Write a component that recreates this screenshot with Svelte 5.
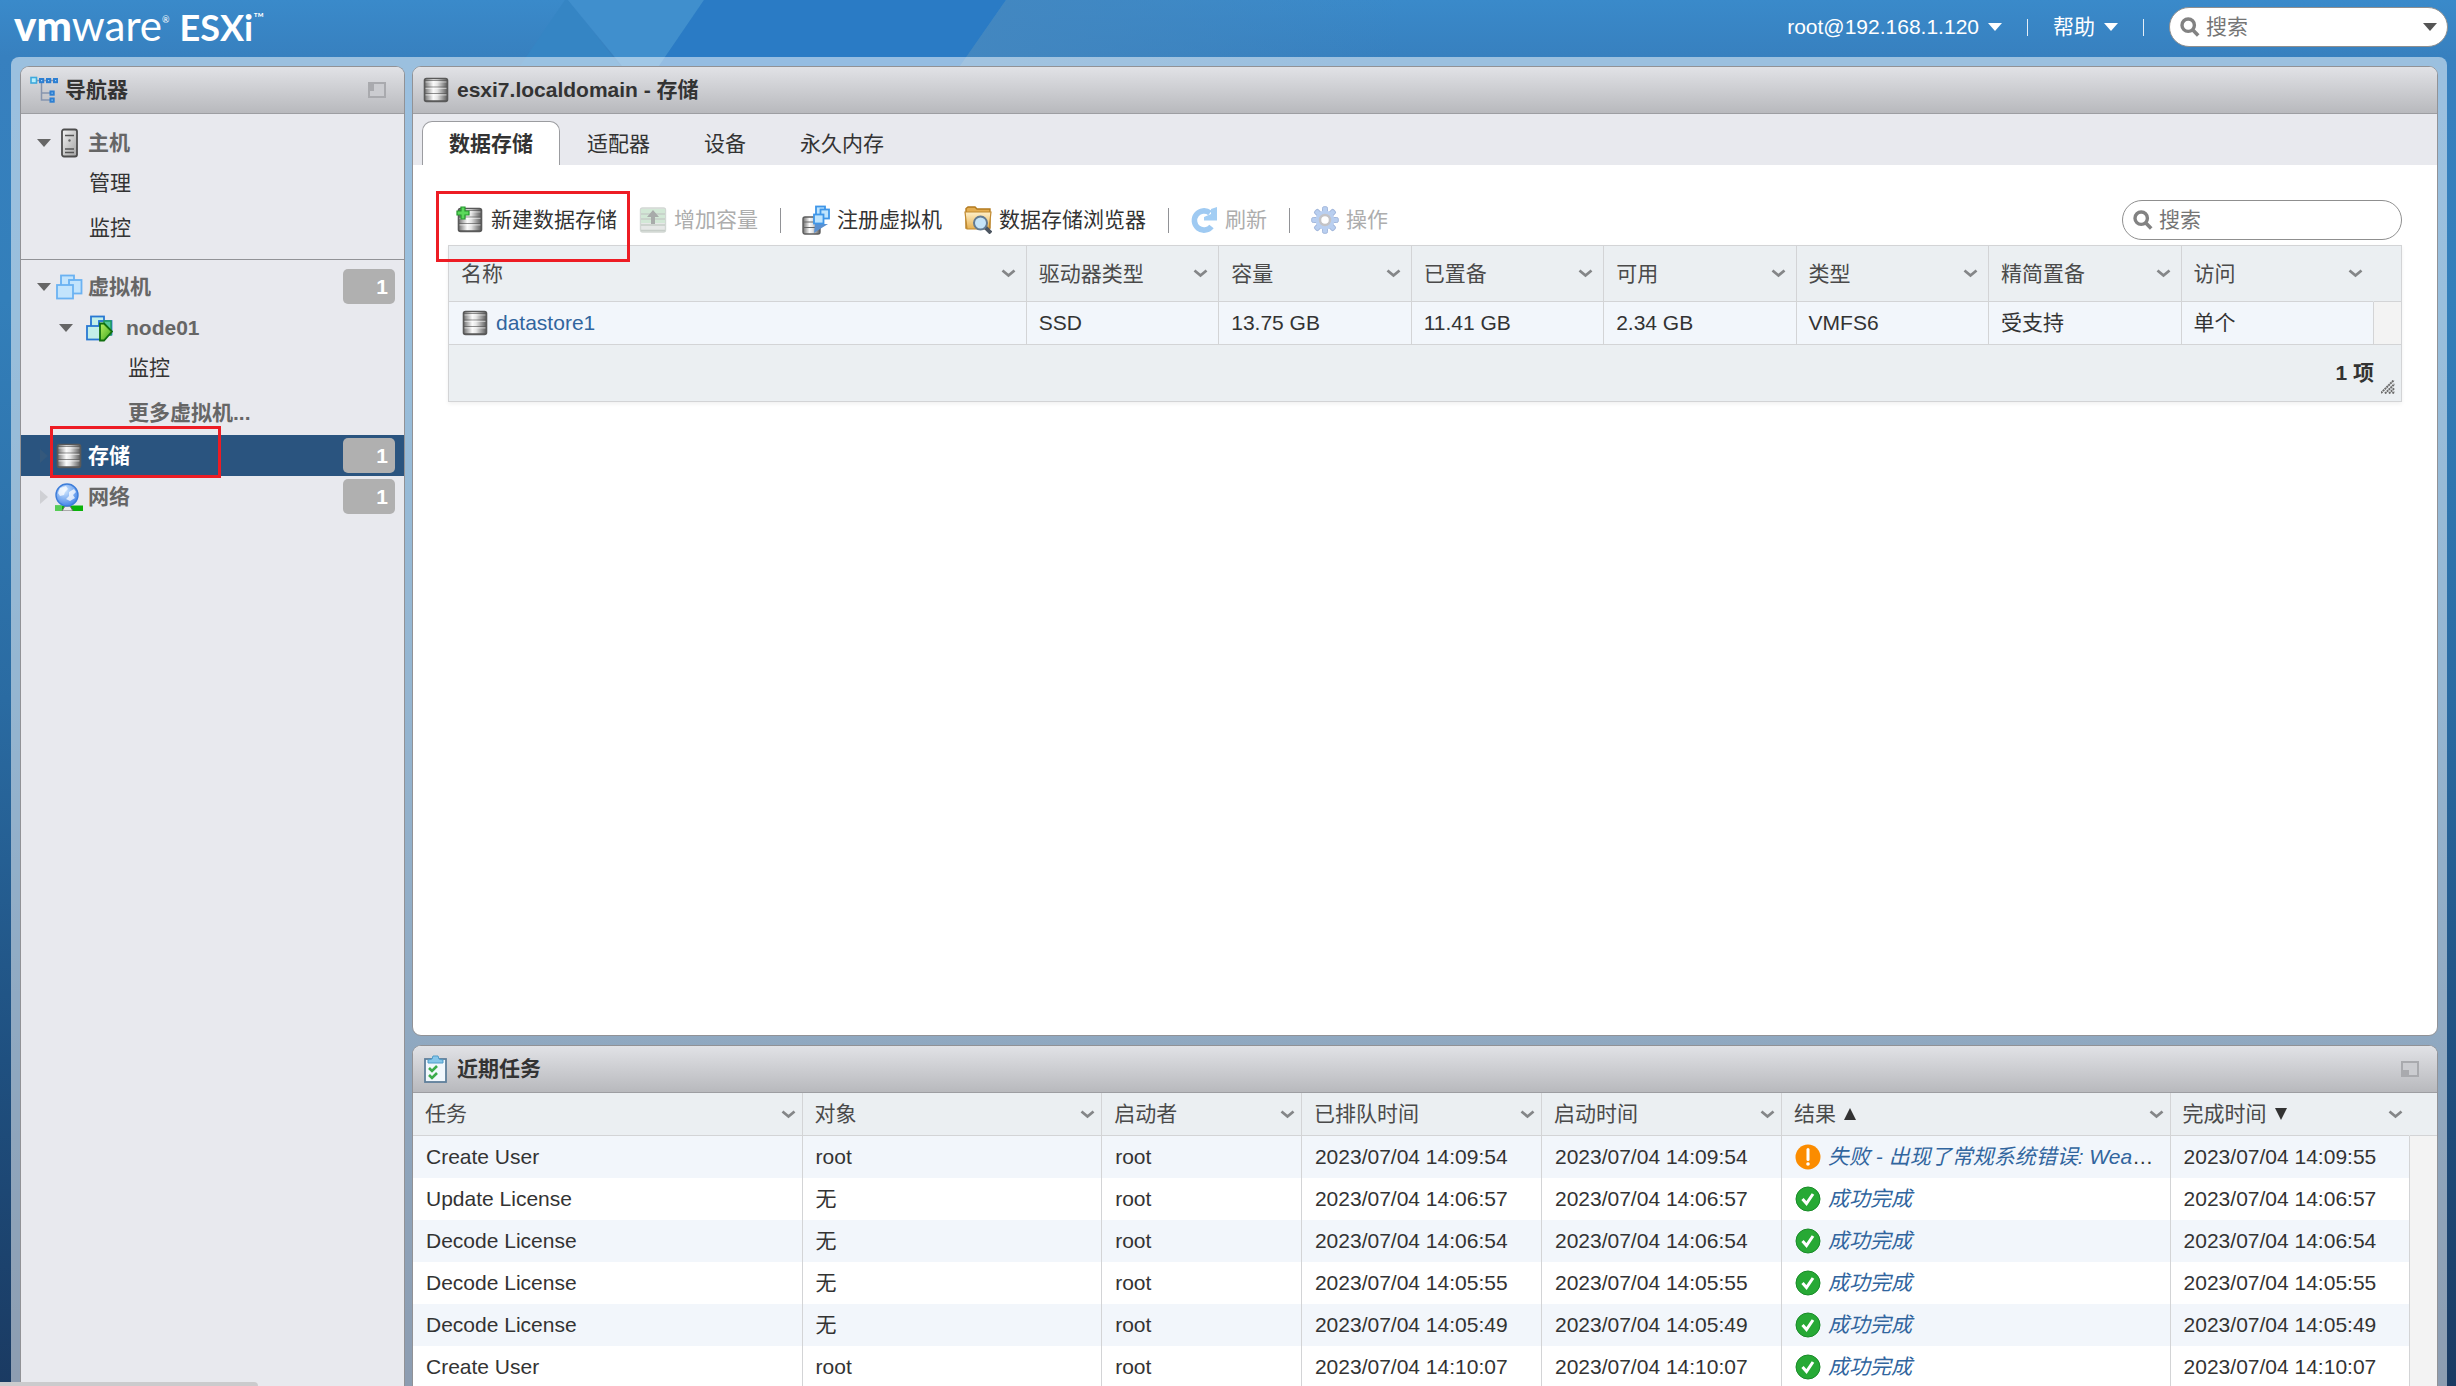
<script lang="ts">
  interface Column {
    label: string;
    width: string;
    sort?: 'up' | 'down';
  }

  interface Task {
    name: string;
    target: string;
    user: string;
    queued: string;
    started: string;
    failed?: boolean;
    result: string;
    completed: string;
  }

  const tabs = ['数据存储', '适配器', '设备', '永久内存'];
  let activeTab = $state('数据存储');

  const storeColumns: Column[] = [
    { label: '名称', width: '29.6%' },
    { label: '驱动器类型', width: 'auto' },
    { label: '容量', width: 'auto' },
    { label: '已置备', width: 'auto' },
    { label: '可用', width: 'auto' },
    { label: '类型', width: 'auto' },
    { label: '精简置备', width: 'auto' },
    { label: '访问', width: 'auto' },
  ];

  const datastores = [
    { name: 'datastore1', cells: ['SSD', '13.75 GB', '11.41 GB', '2.34 GB', 'VMFS6', '受支持', '单个'] },
  ];

  const taskColumns: Column[] = [
    { label: '任务', width: '19.25%' },
    { label: '对象', width: '14.8%' },
    { label: '启动者', width: '9.87%' },
    { label: '已排队时间', width: '11.86%' },
    { label: '启动时间', width: '11.86%' },
    { label: '结果', width: '19.2%', sort: 'up' },
    { label: '完成时间', width: 'auto', sort: 'down' },
  ];

  function done(name: string, target: string, time: string): Task {
    const stamp = '2023/07/04 ' + time;
    return { name, target, user: 'root', queued: stamp, started: stamp, result: '成功完成', completed: stamp };
  }

  const tasks: Task[] = [
    {
      name: 'Create User',
      target: 'root',
      user: 'root',
      queued: '2023/07/04 14:09:54',
      started: '2023/07/04 14:09:54',
      failed: true,
      result: '失败 - 出现了常规系统错误: Wea',
      completed: '2023/07/04 14:09:55',
    },
    done('Update License', '无', '14:06:57'),
    done('Decode License', '无', '14:06:54'),
    done('Decode License', '无', '14:05:55'),
    done('Decode License', '无', '14:05:49'),
    done('Create User', 'root', '14:10:07'),
  ];
</script>

{#snippet caret()}
  <svg class="caret" width="14" height="8" viewBox="0 0 14 8" aria-hidden="true"><path d="M0 0h14L7 8z" fill="currentColor" /></svg>
{/snippet}

{#snippet chevron()}
  <svg class="chevron" width="15" height="9" viewBox="0 0 15 9" aria-hidden="true">
    <path d="M1.5 1.5l6 5 6-5" fill="none" stroke="#848688" stroke-width="2.8" />
  </svg>
{/snippet}

{#snippet magnifier()}
  <svg class="magnifier" width="20" height="20" viewBox="0 0 20 20" aria-hidden="true">
    <circle cx="8.2" cy="8.2" r="6.2" fill="none" stroke="#828282" stroke-width="3.4" />
    <path d="M12.6 12.8l5.6 5.8" stroke="#828282" stroke-width="3.6" />
  </svg>
{/snippet}

{#snippet discs()}
  <rect x="2.5" y="2.5" width="23" height="23" rx="2" fill="url(#steel)" stroke="#5a5a5a" stroke-width="1.6" />
  <path d="M2 4.5h24M3 11h22M3 17.5h22M2 24.5h24" stroke="#555" stroke-opacity=".65" stroke-width="1.2" />
  <path d="M3.5 12.3h21M3.5 18.8h21M3.5 6h21" stroke="#fff" stroke-opacity=".5" stroke-width="1.2" />
{/snippet}

{#snippet storeIcon()}
  <svg class="icon" width="28" height="28" viewBox="0 0 28 28" aria-hidden="true">{@render discs()}</svg>
{/snippet}

{#snippet cubes(light: string, line: string)}
  <g fill={light} stroke={line} stroke-width="1.8">
    <rect x="6" y="2.5" width="13" height="12" />
    <rect x="14" y="7" width="12.5" height="13.5" />
    <rect x="2" y="12" width="16" height="13.5" />
  </g>
  <path d="M14 12V7h5M6 12V7.5" fill="none" stroke={line} stroke-width="1.3" stroke-opacity=".6" />
{/snippet}

{#snippet head(columns: Column[])}
  <colgroup>
    {#each columns as col}
      <col style:width={col.width} />
    {/each}
    <col class="gutter-col" />
  </colgroup>
  <thead>
    <tr>
      {#each columns as col}
        <th scope="col">
          <div class="th-inner">
            <span>{col.label}</span>
            {#if col.sort}
              <svg class="sort" width="12" height="12" viewBox="0 0 12 12" aria-hidden="true">
                <path d={col.sort === 'up' ? 'M6 0l6 12H0z' : 'M0 0h12L6 12z'} fill="#333" />
              </svg>
            {/if}
            {@render chevron()}
          </div>
        </th>
      {/each}
      <td></td>
    </tr>
  </thead>
{/snippet}

<svg class="defs" width="0" height="0" aria-hidden="true">
  <defs>
    <linearGradient id="steel">
      <stop offset="0" stop-color="#6f6f6f" />
      <stop offset=".38" stop-color="#fafafa" />
      <stop offset=".55" stop-color="#e6e6e6" />
      <stop offset="1" stop-color="#595959" />
    </linearGradient>
    <linearGradient id="tower" x2="1" y2="1">
      <stop offset="0" stop-color="#f4f4f4" />
      <stop offset="1" stop-color="#a2a2a2" />
    </linearGradient>
    <linearGradient id="folder" x2="0" y2="1">
      <stop offset="0" stop-color="#fff0c9" />
      <stop offset="1" stop-color="#e6b04f" />
    </linearGradient>
    <linearGradient id="play" x2="1" y2="1">
      <stop offset="0" stop-color="#b8f060" />
      <stop offset="1" stop-color="#3aa51c" />
    </linearGradient>
    <radialGradient id="globe" cx=".4" cy=".3" r=".75">
      <stop offset="0" stop-color="#d3e9ff" />
      <stop offset="1" stop-color="#3d80e6" />
    </radialGradient>
    <linearGradient id="haze">
      <stop offset="0" stop-color="#4387c0" />
      <stop offset="1" stop-color="#4387c0" stop-opacity="0" />
    </linearGradient>
  </defs>
</svg>

<div class="app">
  <svg class="backdrop" width="1400" height="66" viewBox="0 0 1400 66" aria-hidden="true">
    <path d="M565 0L520 66H620L568 0z" fill="#3585c4" />
    <path d="M568 0H704L659 66H622z" fill="#408fcd" />
    <path d="M704 0H1006L960 66H659z" fill="#2a7bc5" />
    <path d="M1006 0H1400V66H960z" fill="url(#haze)" />
  </svg>

  <header class="topbar">
    <div class="logo" aria-label="vmware ESXi">
      <span class="word"><b>vm</b>ware</span><sup>®</sup>
      <span class="product">ESXi</span><sup class="tm">™</sup>
    </div>
    <div class="account">
      <button class="menu" type="button">root@192.168.1.120 {@render caret()}</button>
      <span class="bar"></span>
      <button class="menu" type="button">帮助 {@render caret()}</button>
      <span class="bar"></span>
      <div class="search global">
        {@render magnifier()}
        <input type="text" placeholder="搜索" aria-label="搜索" />
        <button class="drop" type="button" aria-label="搜索选项">{@render caret()}</button>
      </div>
    </div>
  </header>

  <div class="frame">
    <aside class="panel navigator">
      <div class="panel-head">
        <svg class="icon" width="28" height="28" viewBox="0 0 28 28" aria-hidden="true">
          <path d="M4 4.5h22M11.5 4.5V24h9M11.5 17h9" fill="none" stroke="#8795ae" stroke-width="1.5" />
          <rect x="1" y="1.5" width="5.5" height="5.5" fill="#b9f0fb" stroke="#3fa9dc" stroke-width="1.6" />
          <g fill="#a4d4fa" stroke="#2d7fd2" stroke-width="2">
            <rect x="10" y="3" width="3.2" height="3.2" />
            <rect x="17" y="3" width="3.2" height="3.2" />
            <rect x="24" y="3" width="3.2" height="3.2" />
            <rect x="20.5" y="15.5" width="3.2" height="3.2" />
            <rect x="20.5" y="22.5" width="3.2" height="3.2" />
          </g>
        </svg>
        <h2>导航器</h2>
        <button class="resize" type="button" aria-label="最小化">
          <svg width="18" height="16" viewBox="0 0 18 16" aria-hidden="true">
            <rect x="1" y="1" width="16" height="14" fill="#cbccd0" stroke="#a9aaae" stroke-width="2" />
            <path d="M0 0h6v9H0z" fill="#a9aaae" />
          </svg>
        </button>
      </div>

      <nav>
        <div class="group">
          <a class="node" href="#host">
            <span class="arrow">{@render caret()}</span>
            <svg class="icon" width="28" height="30" viewBox="0 0 28 30" aria-hidden="true">
              <rect x="7" y="1.5" width="15" height="27" rx="2" fill="url(#tower)" stroke="#4d4d4d" stroke-width="1.8" />
              <path d="M10 7.5h9M10 21h9M10 24.5h9" stroke="#555" stroke-width="1.6" />
              <circle cx="14.5" cy="12.5" r="1.2" fill="#666" />
            </svg>
            <span>主机</span>
          </a>
          <div class="children">
            <a href="#manage">管理</a>
            <a href="#monitor">监控</a>
          </div>
        </div>

        <div class="group inventory">
          <a class="node" href="#vms">
            <span class="arrow">{@render caret()}</span>
            <svg class="icon" width="28" height="28" viewBox="0 0 28 28" aria-hidden="true">{@render cubes('#c3e4fc', '#6bb2f2')}</svg>
            <span>虚拟机</span>
            <span class="badge">1</span>
          </a>
          <a class="node inner" href="#node01">
            <span class="arrow">{@render caret()}</span>
            <svg class="icon" width="28" height="28" viewBox="0 0 28 28" aria-hidden="true">
              {@render cubes('#c2efe9', '#2878d2')}
              <path d="M19 7h7v14h-7z" fill="#53c69a" stroke="#1c9c5c" stroke-width="1.4" />
              <path d="M15 9.5h4l8 8-8 9h-4z" fill="url(#play)" stroke="#12700f" stroke-width="1.8" />
            </svg>
            <span>node01</span>
          </a>
          <div class="children deep">
            <a href="#vm-monitor">监控</a>
            <a class="more" href="#more">更多虚拟机...</a>
          </div>
          <a class="node selected" href="#storage" aria-current="page">
            <span class="arrow closed">{@render caret()}</span>
            {@render storeIcon()}
            <span>存储</span>
            <span class="badge">1</span>
            <span class="callout"></span>
          </a>
          <a class="node" href="#network">
            <span class="arrow closed">{@render caret()}</span>
            <svg class="icon" width="28" height="28" viewBox="0 0 28 28" aria-hidden="true">
              <path d="M0 22.5h28V28H0z" fill="#0ab30a" />
              <path d="M0 22.5h7V28H0z" fill="#55cc55" />
              <path d="M7 28l3-5h5l3 5z" fill="#e9e9e9" stroke="#6d6d6d" />
              <circle cx="12" cy="12" r="11" fill="url(#globe)" stroke="#3d7dd9" stroke-width="1.4" />
              <path d="M5 5l6-2 2 3-3 3-1 3-4 1-2-3zM14 9l5-3 2 3-3 3 2 3-5 3-4-2 3-3z" fill="#fff" fill-opacity=".75" />
            </svg>
            <span>网络</span>
            <span class="badge">1</span>
          </a>
        </div>
      </nav>
    </aside>

    <main class="panel">
      <div class="panel-head">
        {@render storeIcon()}
        <h1>esxi7.localdomain - 存储</h1>
      </div>

      <div class="tabs" role="tablist">
        {#each tabs as tab}
          <button
            type="button"
            role="tab"
            class:active={tab === activeTab}
            aria-selected={tab === activeTab}
            onclick={() => (activeTab = tab)}
          >{tab}</button>
        {/each}
      </div>

      <section class="content">
        <div class="toolbar">
          <button type="button">
            <svg class="icon" width="28" height="28" viewBox="0 0 28 28" aria-hidden="true">
              {@render discs()}
              <path d="M5 1h4v4h4v4H9v4H5V9H1V5h4z" fill="#5bd95b" stroke="#23962c" stroke-width="1.2" />
            </svg>
            新建数据存储
          </button>
          <button type="button" disabled>
            <svg class="icon" width="28" height="28" viewBox="0 0 28 28" aria-hidden="true">
              <rect x="1.5" y="2" width="25" height="24" rx="2" fill="#e6e8e7" stroke="#d2d8d4" stroke-width="1.4" />
              <path d="M2 3h24v14H2z" fill="#d2e8d6" />
              <path d="M2 8h24M2 13h24M2 19h24M2 24.5h24" stroke="#c6cdc8" stroke-width="1.4" />
              <path d="M14 4l6 7h-4v7h-4v-7H8z" fill="#a8abaa" />
            </svg>
            增加容量
          </button>
          <span class="divider"></span>
          <button type="button">
            <svg class="icon" width="28" height="30" viewBox="0 0 28 30" aria-hidden="true">
              <rect x="1" y="12" width="17" height="17" rx="2" fill="url(#steel)" stroke="#5c5c5c" stroke-width="1.4" />
              <path d="M1 17h17M1 22.5h17" stroke="#666" />
              <path d="M13 19h13l-8 5-6 4z" fill="#5a90d0" />
              <g fill="#bfe4fd" stroke="#3f96e8" stroke-width="1.8">
                <rect x="14" y="1.5" width="9" height="9" />
                <rect x="18.5" y="4.500" width="8.500" height="9" />
                <rect x="12" y="9.500" width="9.500" height="9" />
              </g>
            </svg>
            注册虚拟机
          </button>
          <button type="button">
            <svg class="icon" width="28" height="28" viewBox="0 0 28 28" aria-hidden="true">
              <path d="M2 22V2.500l2-1.500h7l2 2h13v19z" fill="#e4ae52" stroke="#b37a1e" stroke-width="1.4" />
              <path d="M1 6h26l-2 17H3z" fill="url(#folder)" stroke="#c08a30" stroke-width="1.2" />
              <path d="M21 21l6 6" stroke="#4c5560" stroke-width="4" />
              <circle cx="16.500" cy="17" r="6.500" fill="#c5e4f8" stroke="#637b92" stroke-width="2" />
            </svg>
            数据存储浏览器
          </button>
          <span class="divider"></span>
          <button type="button" disabled>
            <svg class="icon" width="28" height="28" viewBox="0 0 28 28" aria-hidden="true">
              <path d="M21.500 20.500A9.600 9.600 0 1 1 20 7" fill="none" stroke="#9fcaf2" stroke-width="5.600" />
              <path d="M27 1v13.500H14V11l7-3V3z" fill="#a3cef4" />
            </svg>
            刷新
          </button>
          <span class="divider"></span>
          <button type="button" disabled>
            <svg class="icon" width="28" height="28" viewBox="0 0 28 28" aria-hidden="true">
              <g fill="#b9cff0" stroke="#a5b9dc" stroke-width="1">
                {#each [0, 45, 90, 135] as angle}
                  <rect x="11.500" y=".7" width="5" height="26.600" rx="1.500" transform="rotate({angle} 14 14)" />
                {/each}
              </g>
              <circle cx="14" cy="14" r="9.500" fill="#b9cff0" />
              <circle cx="14" cy="14" r="5" fill="#fff" stroke="#c3c3c6" stroke-width="2.500" />
            </svg>
            操作
          </button>
          <div class="search">
            {@render magnifier()}
            <input type="text" placeholder="搜索" aria-label="搜索数据存储" />
          </div>
        </div>

        <div class="grid">
          <table class="stores">
            {@render head(storeColumns)}
            <tbody>
              {#each datastores as store}
                <tr>
                  <td>
                    <a class="store-link" href="#datastore">{@render storeIcon()}{store.name}</a>
                  </td>
                  {#each store.cells as cell}
                    <td>{cell}</td>
                  {/each}
                  <td class="gutter"></td>
                </tr>
              {/each}
            </tbody>
          </table>
          <div class="grid-foot">
            {datastores.length} 项
            <svg class="grip" width="14" height="14" viewBox="0 0 14 14" aria-hidden="true">
              <path d="M0 13L13 0M4 13.500L13.500 4M8 13.500L13.500 8M11.500 13.500l2-2" stroke="#6c6c6c" stroke-width="2" stroke-dasharray="2 .6" />
            </svg>
          </div>
        </div>
        <span class="callout"></span>
      </section>
    </main>

    <section class="panel tasks">
      <div class="panel-head">
        <svg class="icon" width="28" height="28" viewBox="0 0 28 28" aria-hidden="true">
          <rect x="3" y="4" width="21" height="23" fill="#f2f8fd" stroke="#5f7f9b" stroke-width="1.800" />
          <path d="M6 8V5l4-1 1-3h5l1 3 4 1v3z" fill="#86c6ea" stroke="#4f9cc9" />
          <path d="M7 13l3 3 5-5M7 20l3 3 5-5" fill="none" stroke="#3cab4c" stroke-width="2.600" />
        </svg>
        <h2>近期任务</h2>
        <button class="resize" type="button" aria-label="最小化">
          <svg width="18" height="16" viewBox="0 0 18 16" aria-hidden="true">
            <rect x="1" y="1" width="16" height="14" fill="#cbccd0" stroke="#a9aaae" stroke-width="2" />
            <path d="M0 9h8v7H0z" fill="#a9aaae" />
          </svg>
        </button>
      </div>

      <table class="task-table">
        {@render head(taskColumns)}
        <tbody>
          {#each tasks as task}
            <tr>
              <td>{task.name}</td>
              <td>{task.target}</td>
              <td>{task.user}</td>
              <td>{task.queued}</td>
              <td>{task.started}</td>
              <td>
                <div class="result">
                  <svg width="26" height="26" viewBox="0 0 26 26" aria-hidden="true">
                    {#if task.failed}
                      <circle cx="13" cy="13" r="12.500" fill="#fb8c00" />
                      <path d="M13 5.500v10" stroke="#fff" stroke-width="3" stroke-linecap="round" />
                      <circle cx="13" cy="20" r="1.800" fill="#fff" />
                    {:else}
                      <circle cx="13" cy="13" r="12" fill="#27a935" stroke="#198a28" />
                      <path d="M7.500 13l4 4.500L18 8" fill="none" stroke="#fff" stroke-width="3" />
                    {/if}
                  </svg>
                  <a href="#result">{task.result}</a>{#if task.failed}<span>…</span>{/if}
                </div>
              </td>
              <td>{task.completed}</td>
              <td class="gutter"></td>
            </tr>
          {/each}
        </tbody>
      </table>
    </section>
  </div>

  <div class="status"></div>
</div>

<style>
  :global(body) {
    margin: 0;
  }

  .app {
    position: relative;
    display: flex;
    flex-direction: column;
    height: 100vh;
    overflow: hidden;
    font: 21px/30px "Liberation Sans", "Noto Sans CJK SC", sans-serif;
    color: #333;
    background: linear-gradient(#3a8aca 0, #3780bf 57px, #337fba 300px, #2a6ba2 700px, #1f5080 1060px, #1a3a62 100%);
  }

  .app :global(*) {
    box-sizing: border-box;
  }

  .defs,
  .backdrop {
    position: absolute;
    top: 0;
    left: 0;
  }

  svg {
    display: block;
    flex-shrink: 0;
  }

  a {
    color: inherit;
    text-decoration: none;
  }

  button {
    padding: 0;
    border: 0;
    background: none;
    font: inherit;
    color: inherit;
    white-space: nowrap;
  }

  h1,
  h2 {
    margin: 0;
    font-size: 21px;
    font-weight: bold;
  }

  /* top bar */

  .topbar {
    position: relative;
    display: flex;
    justify-content: space-between;
    height: 57px;
    padding: 0 8px 0 14px;
    color: #fff;
  }

  .logo {
    display: flex;
    align-items: baseline;
    font-family: Lato, sans-serif;
    line-height: 50px;
  }

  .word {
    font-size: 42px;
  }

  .word b {
    font-weight: 900;
  }

  .product {
    margin-left: 10px;
    font-size: 36px;
    font-weight: bold;
  }

  .logo sup {
    align-self: flex-start;
    font-size: 9px;
    line-height: 40px;
  }

  .logo .tm {
    font-size: 14px;
    line-height: 36px;
  }

  .account {
    display: flex;
    align-items: center;
    height: 54px;
  }

  .menu {
    display: flex;
    align-items: center;
    gap: 9px;
  }

  .bar {
    width: 1px;
    height: 17px;
    margin: 0 25px;
    background: #e4eef7;
  }

  .search {
    display: flex;
    align-items: center;
    gap: 6px;
    width: 280px;
    height: 40px;
    padding: 0 10px;
    border: 1px solid #8f8f8f;
    border-radius: 20px;
    background: #fff;
    color: #555;
  }

  .search input {
    flex: 1;
    min-width: 0;
    padding: 0;
    border: 0;
    outline: 0;
    background: none;
    font: inherit;
  }

  .search input::placeholder {
    color: #757575;
  }

  /* panels */

  .frame {
    position: relative;
    flex: 1;
    display: grid;
    grid-template: minmax(0, 1fr) 341px / 385px minmax(0, 1fr);
    gap: 9px 7px;
    min-height: 0;
    margin: 0 9px 0 11px;
    padding: 9px 9px 0;
    border-radius: 8px 8px 0 0;
    background: rgba(255, 255, 255, 0.5);
  }

  .panel {
    min-width: 0;
    overflow: hidden;
    border: 1px solid #919296;
    border-radius: 9px;
    background: #fff;
  }

  .navigator {
    grid-row: 1 / 3;
    border-bottom: 0;
    border-radius: 9px 9px 0 0;
    background: #e8e9ee;
  }

  .tasks {
    border-bottom: 0;
    border-radius: 9px 9px 0 0;
  }

  .panel-head {
    display: flex;
    align-items: center;
    gap: 7px;
    height: 47px;
    padding: 0 18px 0 9px;
    border-bottom: 1px solid #9d9ea2;
    background: linear-gradient(#e1e2e6, #b8b9bd);
  }

  .resize {
    margin-left: auto;
  }

  /* navigator */

  .group {
    padding: 8px 0 12px;
  }

  .inventory {
    padding-top: 6px;
    border-top: 1px solid #919296;
  }

  .node {
    position: relative;
    display: flex;
    align-items: center;
    gap: 5px;
    height: 41px;
    padding: 0 9px 0 16px;
    font-weight: bold;
    color: #666;
  }

  .inner {
    gap: 13px;
    padding-left: 38px;
  }

  .arrow {
    display: flex;
    width: 13px;
    color: #666;
  }

  .closed {
    justify-content: center;
    color: #cfd0d4;
  }

  .closed :global(svg) {
    transform: rotate(-90deg);
  }

  .selected {
    background: #2a547f;
    color: #fff;
  }

  .selected .closed {
    color: #34587c;
  }

  .badge {
    width: 52px;
    height: 35px;
    margin-left: auto;
    padding-right: 7px;
    border-radius: 5px;
    background: #b0b0b0;
    line-height: 35px;
    text-align: right;
    color: #fff;
  }

  .children {
    display: flex;
    flex-direction: column;
    gap: 6px;
    padding-left: 68px;
    line-height: 39px;
  }

  .deep {
    padding: 0 0 3px 107px;
  }

  .more {
    font-weight: bold;
    color: #666;
  }

  .callout {
    position: absolute;
    top: 26px;
    left: 23px;
    width: 194px;
    height: 71px;
    border: 3px solid #ed1c24;
    pointer-events: none;
  }

  .selected .callout {
    z-index: 1;
    top: -9px;
    left: 29px;
    width: 171px;
    height: 52px;
  }

  /* storage view */

  .tabs {
    display: flex;
    align-items: flex-end;
    height: 51px;
    padding-left: 9px;
    background: #e8e9ee;
  }

  .tabs button {
    height: 44px;
    padding: 0 26px;
    border: 1px solid transparent;
    border-bottom: 0;
  }

  .tabs .active {
    border-color: #9b9ca0;
    border-radius: 10px 10px 0 0;
    background: #fff;
    font-weight: bold;
  }

  .content {
    position: relative;
    padding: 30px 35px;
  }

  .toolbar {
    display: flex;
    align-items: center;
    height: 50px;
    padding-left: 8px;
  }

  .toolbar button {
    display: flex;
    align-items: center;
    gap: 7px;
    margin-right: 22px;
  }

  .toolbar button:disabled {
    color: #adadad;
  }

  .divider {
    width: 1px;
    height: 25px;
    margin-right: 21px;
    background: #919296;
  }

  .toolbar .search {
    margin-left: auto;
  }

  .global {
    width: 279px;
  }

  .drop {
    color: #555;
  }

  /* tables */

  table {
    width: 100%;
    table-layout: fixed;
    border-collapse: separate;
    border-spacing: 0;
  }

  .gutter-col {
    width: 27px;
  }

  th,
  td {
    padding: 0 6px 0 13px;
    border-right: 1px solid #d3d4d6;
    text-align: left;
    white-space: nowrap;
    overflow: hidden;
  }

  th,
  thead td {
    height: 43px;
    padding-left: 12px;
    border-bottom: 1px solid #d3d4d6;
    background: #ebeff2;
    font-weight: normal;
    color: #4a4a4a;
  }

  thead th:nth-last-child(2) {
    border-right-color: #ebeff2;
  }

  tr > td:last-child {
    padding: 0;
    border-right: 0;
  }

  .th-inner {
    display: flex;
    align-items: center;
  }

  .th-inner .chevron {
    margin-left: auto;
  }

  .sort {
    margin-left: 8px;
  }

  tbody td {
    height: 42px;
    padding-right: 0;
  }

  tbody tr:nth-child(odd) td {
    background: #f2f6fb;
  }

  tbody tr td.gutter {
    background: #f3f3f3;
  }

  .grid {
    border: 1px solid #d3d4d6;
    box-shadow: 0 2px 4px rgba(0, 0, 0, 0.06);
  }

  .stores th {
    height: 56px;
    padding-right: 10px;
  }

  .stores tbody td {
    height: 43px;
    padding-left: 12px;
    border-bottom: 1px solid #d3d4d6;
  }

  .store-link {
    display: flex;
    align-items: center;
    gap: 7px;
  }

  .store-link,
  .result a {
    color: #31659e;
  }

  .grid-foot {
    position: relative;
    height: 56px;
    padding-right: 27px;
    background: #ebeff2;
    font-weight: bold;
    line-height: 56px;
    text-align: right;
  }

  .grip {
    position: absolute;
    right: 6px;
    bottom: 7px;
  }

  .result {
    display: flex;
    align-items: center;
  }

  .result a {
    margin-left: 7px;
    font-style: italic;
  }

  .status {
    position: absolute;
    bottom: 0;
    left: 0;
    width: 258px;
    height: 4px;
    border-radius: 0 4px 0 0;
    background: #cbcbcd;
  }
</style>
